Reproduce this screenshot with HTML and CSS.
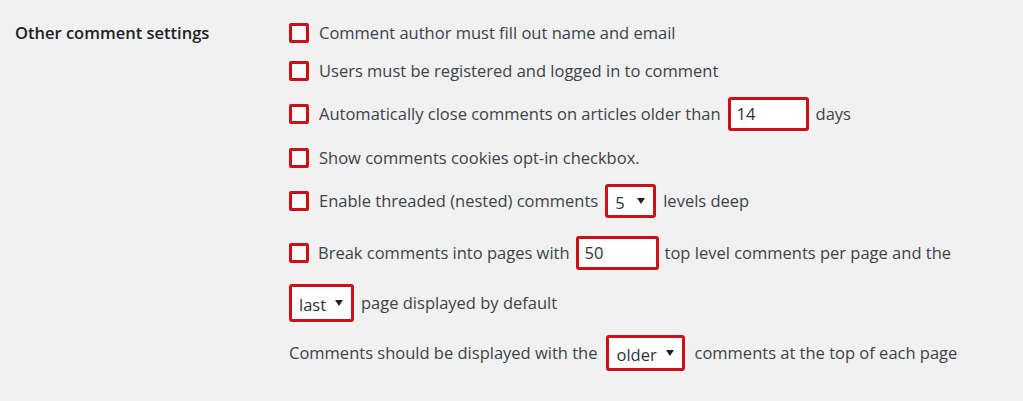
FILE: index.html
```html
<!DOCTYPE html>
<html lang="en">
<head>
<meta charset="utf-8">
<title>Discussion Settings</title>
<link rel="stylesheet" href="styles.css">
</head>
<body>
<div class="settings">
  <div class="settings__label">Other comment settings</div>
  <div class="settings__fields">
    <label class="row row--first"><input type="checkbox" class="check"><span>Comment author must fill out name and email</span></label>
    <label class="row row--second"><input type="checkbox" class="check"><span>Users must be registered and logged in to comment</span></label>
    <label class="row row--third"><input type="checkbox" class="check"><span>Automatically close comments on articles older than</span><input type="text" class="field field--days" value="14"><span>days</span></label>
    <label class="row row--fourth"><input type="checkbox" class="check"><span>Show comments cookies opt-in checkbox.</span></label>
    <label class="row row--fifth"><input type="checkbox" class="check"><span>Enable threaded (nested) comments</span><span class="select select--depth"><select><option>5</option></select></span><span>levels deep</span></label>
    <label class="row row--sixth"><input type="checkbox" class="check"><span>Break comments into pages with</span><input type="text" class="field field--per-page" value="50"><span>top level comments per page and the</span></label>
    <label class="row row--seventh"><span class="select select--page"><select><option>last</option></select></span><span>page displayed by default</span></label>
    <label class="row row--eighth"><span>Comments should be displayed with the</span><span class="select select--order"><select><option>older</option></select></span><span>comments at the top of each page</span></label>
  </div>
</div>
</body>
</html>
```

FILE: styles.css
```css
html, body {
  margin: 0;
  padding: 0;
  background: #f1f1f1;
}

body {
  font-family: "Open Sans", "Noto Sans", sans-serif;
  font-size: 16.5px;
  color: #3c434a;
}

.settings {
  display: flex;
  padding: 13px 0 0 15px;
}

.settings__label {
  width: 274px;
  flex: none;
  font-weight: 600;
  color: #1d2327;
  line-height: 40px;
}

.settings__fields {
  display: flex;
  flex-direction: column;
}

.row {
  display: flex;
  align-items: center;
  gap: 7px;
  white-space: nowrap;
}

.row--first   { height: 39px; }
.row--second  { height: 37px; }
.row--third   { height: 49px; }
.row--fourth  { height: 39px; }
.row--fifth   { height: 47px; }
.row--sixth   { height: 57px; gap: 6px; }
.row--seventh { height: 43px; }
.row--eighth  { height: 57px; gap: 9px; }

.check {
  appearance: none;
  -webkit-appearance: none;
  width: 20px;
  height: 20px;
  margin: 0 3px 0 0;
  box-sizing: border-box;
  border: 3px solid #cc1016;
  border-radius: 2px;
  background: #fbfbfb;
  flex: none;
}

.field,
.select select {
  font: inherit;
  color: #2c3338;
  background: #fff;
  border: 3px solid #cc1016;
  border-radius: 3px;
  box-sizing: border-box;
  margin: 0;
  outline: none;
}

.field {
  height: 34px;
  padding: 0 6px;
}

.field--days { width: 81px; }
.field--per-page { width: 83px; }

.select {
  position: relative;
  display: inline-flex;
}

.select select {
  appearance: none;
  -webkit-appearance: none;
  padding: 4px 0 0 7px;
}

.select::after {
  content: "";
  position: absolute;
  right: 11px;
  top: 50%;
  margin-top: -3px;
  border-left: 4px solid transparent;
  border-right: 4px solid transparent;
  border-top: 6px solid #1d2327;
  pointer-events: none;
}

.select--depth select { width: 51px; height: 34px; }
.select--page select  { width: 65px; height: 38px; }
.select--order select { width: 79px; height: 36px; }
```
